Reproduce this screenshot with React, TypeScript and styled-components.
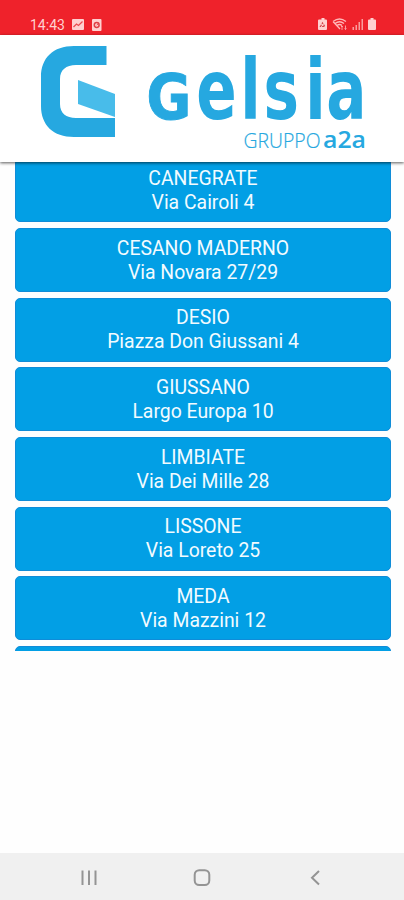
import React from "react";
import styled, { createGlobalStyle } from "styled-components";

const GlobalStyle = createGlobalStyle`
  * { box-sizing: border-box; }
  body { margin: 0; background: #fff; font-family: Roboto, sans-serif; }
`;

const Screen = styled.div`
  width: 100%;
  height: 900px;
  display: flex;
  flex-direction: column;
  background: #fefefe;
  overflow: hidden;
`;

const StatusBar = styled.div`
  height: 35px;
  flex: none;
  display: flex;
  align-items: center;
  padding: 14px 27px 0 30px;
  background: #ef222b;
  color: #ffd0d0;
  font-size: 14px;
  line-height: 20px;
`;

const Clock = styled.span`
  width: 42px;
`;

const StatusIcons = styled.svg<{ $end?: boolean }>`
  display: block;
  height: 14px;
  width: ${(p) => (p.$end ? 60 : 30)}px;
  margin-left: ${(p) => (p.$end ? "auto" : "0")};
`;

const Header = styled.header`
  height: 127px;
  flex: none;
  z-index: 1;
  background: #fff;
  box-shadow: 0 1px 3px rgba(0, 0, 0, 0.65);
`;

const Logo = styled.svg`
  display: block;
  width: 404px;
  height: 126px;
`;

const OfficeList = styled.main`
  height: 488.5px;
  flex: none;
  display: flex;
  flex-direction: column;
  gap: 5.65px;
  padding: 0 13px 0 15px;
  overflow: hidden;
`;

const OfficeCard = styled.button<{ $scrolled?: boolean }>`
  flex: none;
  height: 64px;
  margin: ${(p) => (p.$scrolled ? "-3.7px" : "0")} 0 0;
  padding: 7.65px 0 8.35px;
  border: 1px solid #108cd8;
  border-width: 1px 0.5px;
  border-radius: 5px;
  background: #029fe5;
  color: #f2fbff;
  font: 400 19.4px/24px Roboto, sans-serif;
  text-align: center;
`;

const Line = styled.span`
  display: block;
`;

const NavBar = styled.nav`
  height: 47px;
  flex: none;
  margin-top: auto;
  display: flex;
  align-items: center;
  justify-content: space-between;
  padding: 2px 79px 0;
  background: #f0f0f0;
`;

const NavIcon = styled.svg`
  display: block;
  width: 20px;
  height: 20px;
  fill: none;
  stroke: #949494;
  stroke-width: 2;
`;

const offices = [
  ["CANEGRATE", "Via Cairoli 4"],
  ["CESANO MADERNO", "Via Novara 27/29"],
  ["DESIO", "Piazza Don Giussani 4"],
  ["GIUSSANO", "Largo Europa 10"],
  ["LIMBIATE", "Via Dei Mille 28"],
  ["LISSONE", "Via Loreto 25"],
  ["MEDA", "Via Mazzini 12"],
  ["", ""],
];

const GelsiaLogo = () => (
  <Logo viewBox="0 35 404 126">
    <path
      d="M106.500 46H74C53 46 41 58 41 77V106C41 125 53 137 74 137H115V118H76C66 118 60 113 60 104V79C60 70 66 65 76 65H106.500Z"
      fill="#26a8e0"
    />
    <path d="M78 80L115 94V117L78 104Z" fill="#48bcea" />
    <g fill="#26a8e0">
      <text
        transform="translate(0 118.500) scale(.71 1)"
        fontFamily="DejaVu Sans"
        fontWeight="700"
        fontSize="84"
      >
        <tspan x="206.500" fontSize="62" textLength="63" lengthAdjust="spacingAndGlyphs" stroke="#26a8e0" strokeWidth="1">G</tspan>
        <tspan x="276.500 338.500 371 430 459.500">elsia</tspan>
      </text>
      <text x="243.500" y="148" fontFamily="Open Sans" fontWeight="300" fontSize="20" stroke="#26a8e0" strokeWidth=".2" textLength="77" lengthAdjust="spacingAndGlyphs">
        GRUPPO
      </text>
      <text x="323" y="148" fontFamily="Open Sans" fontWeight="600" fontSize="23" textLength="43" lengthAdjust="spacingAndGlyphs">
        a2a
      </text>
    </g>
  </Logo>
);

export default function App() {
  return (
    <Screen>
      <GlobalStyle />
      <StatusBar>
        <Clock>14:43</Clock>
        <StatusIcons viewBox="0 0 30 14" fill="#ffd0d0">
          <rect x="0" y="1" width="12" height="11" rx="1" />
          <path d="M1.500 9L4.500 6L6.500 7.500L10.500 3.500" fill="none" stroke="#e94b50" strokeWidth="1.300" />
          <rect x="20" y="1" width="9.500" height="12" rx="1" />
          <circle cx="24.700" cy="7" r="2.400" fill="none" stroke="#df3e45" strokeWidth="1.500" />
          <path d="M24.700 7L27 5" stroke="#df3e45" />
        </StatusIcons>
        <StatusIcons $end viewBox="0 0 60 14" fill="#ffd0d0">
          <path d="M3 1.500H4.500V0H7.500V1.500H9A1 1 0 0 1 10 2.500V11A1 1 0 0 1 9 12H2A1 1 0 0 1 1 11V2.500A1 1 0 0 1 2 1.500Z" />
          <path d="M3.500 8.500L5.500 5L7.800 8.500Z" fill="none" stroke="#d4474d" strokeWidth="1.200" strokeDasharray="2 1" />
          <g fill="none" stroke="#ffb8b8" strokeWidth="1.300">
            <path d="M16 3.500Q22.500-1.500 29 3.500M18 5.500Q22.500 2 27 5.500M20 7.500Q22.500 5.500 25 7.500M16 3.500L23 11" />
            <path d="M25 12V8M24 9L25 8L26 9M28.500 7.500V11.500M27.500 10.500L28.500 11.500L29.500 10.500" strokeWidth=".8" />
          </g>
          <path d="M35.500 9H37V12H35.500ZM38.500 7H40V12H38.500ZM41.500 4H43V12H41.500ZM44.500 1H46V12H44.500Z" opacity=".7" />
          <path d="M52 1.500H53.500V0H56.500V1.500H58A1 1 0 0 1 59 2.500V11A1 1 0 0 1 58 12H52A1 1 0 0 1 51 11V2.500A1 1 0 0 1 52 1.500Z" />
        </StatusIcons>
      </StatusBar>
      <Header>
        <GelsiaLogo />
      </Header>
      <OfficeList>
        {offices.map(([town, address], i) => (
          <OfficeCard key={i} $scrolled={i === 0}>
            <Line>{town}</Line>
            <Line>{address}</Line>
          </OfficeCard>
        ))}
      </OfficeList>
      <NavBar>
        <NavIcon viewBox="0 0 20 20">
          <path d="M3.500 2.500V17M10 2.500V17M16.500 2.500V17" />
        </NavIcon>
        <NavIcon viewBox="0 0 20 20">
          <rect x="2.700" y="2.200" width="14.600" height="14.800" rx="4.500" />
        </NavIcon>
        <NavIcon viewBox="0 0 20 20">
          <path d="M14 3L7 9.800L14 16.500" />
        </NavIcon>
      </NavBar>
    </Screen>
  );
}
